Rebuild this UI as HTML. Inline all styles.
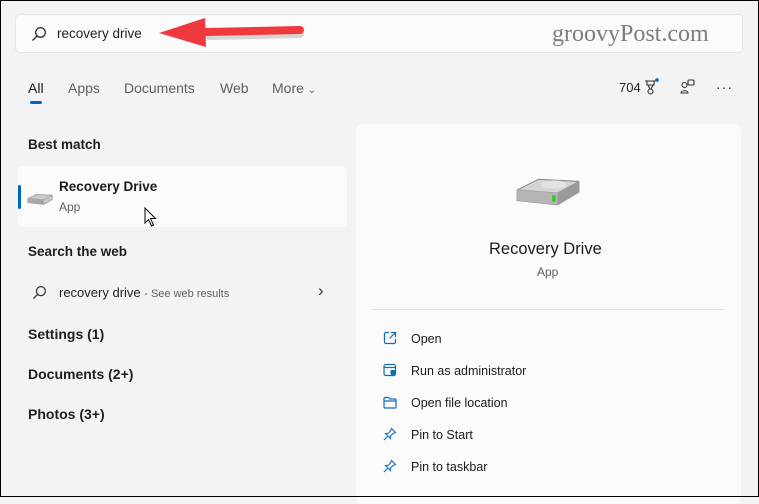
<!DOCTYPE html>
<html><head><meta charset="utf-8"><style>
*{margin:0;padding:0;box-sizing:border-box}
body{width:759px;height:497px;overflow:hidden;background:#f3f3f3;font-family:"Liberation Sans","DejaVu Sans",sans-serif;color:#1b1b1b;position:relative}
.frame{position:absolute;inset:0;border:1px solid #000;pointer-events:none;z-index:9}
.a{position:absolute;white-space:nowrap}
.search{position:absolute;left:15px;top:14px;width:728px;height:39px;background:#fbfbfb;border:1px solid #e6e6e6;border-radius:5px}
.h{font-size:14px;font-weight:bold;color:#202020}
.tab{font-size:14px;color:#5f5f5f;top:80px}
.panel{position:absolute;left:356px;top:124px;width:385px;height:380px;background:#fbfbfb;border-radius:7px}
.act{font-size:12.5px;color:#1b1b1b;left:411px}
svg.ic{position:absolute}
</style></head><body>
<div class="frame"></div>
<div class="search"></div>
<svg class="ic" style="left:31px;top:26px" width="16" height="16" viewBox="0 0 16 16"><circle cx="9.5" cy="6.5" r="4.8" fill="none" stroke="#333" stroke-width="1.3"/><path d="M6 10L1.5 14.5" stroke="#333" stroke-width="1.4"/></svg>
<div class="a" style="left:57px;top:26px;font-size:13.5px;color:#222">recovery drive</div>
<svg class="ic" style="left:155px;top:16px" width="150" height="36" viewBox="0 0 150 36"><path d="M52 17L143 15" stroke="#8f8f8f" stroke-width="8" stroke-linecap="round" opacity=".35" transform="translate(2,3)"/><path d="M50 16L145 14" stroke="#ee3a3e" stroke-width="8" stroke-linecap="round"/><path d="M4 17L50 2L51 31Z" fill="#ee3a3e"/></svg>
<div class="a" style="left:552px;top:21px;font-size:24px;font-family:'Liberation Serif',serif;color:#7d7d7d">groovyPost.com</div>

<div class="a tab" style="left:28px;color:#1b1b1b">All</div>
<div style="position:absolute;left:30px;top:101px;width:12px;height:3px;border-radius:2px;background:#0067c0"></div>
<div class="a tab" style="left:68px">Apps</div>
<div class="a tab" style="left:124px">Documents</div>
<div class="a tab" style="left:220px">Web</div>
<div class="a tab" style="left:272px">More <span style="font-size:10px">&#8964;</span></div>
<div class="a" style="left:619px;top:80px;font-size:13px;color:#222">704</div>
<svg class="ic" style="left:643px;top:78px" width="16" height="18" viewBox="0 0 16 18"><path d="M2 3h11M4 3v4h7V3M5 7l2 4M10 7l-2 4" fill="none" stroke="#333" stroke-width="1.1"/><circle cx="7.5" cy="13.5" r="2.5" fill="none" stroke="#333" stroke-width="1.1"/><circle cx="14" cy="2" r="1.8" fill="#0067c0"/></svg>
<svg class="ic" style="left:680px;top:79px" width="16" height="16" viewBox="0 0 16 16"><circle cx="4.5" cy="6" r="2.5" fill="none" stroke="#333" stroke-width="1.1"/><path d="M1 14c0-3 7-3 7 0z" fill="none" stroke="#333" stroke-width="1.1"/><rect x="8" y="1" width="6" height="5" rx="1" fill="none" stroke="#333" stroke-width="1.1"/></svg>
<div class="a" style="left:716px;top:79px;font-size:14px;color:#333;letter-spacing:1px">&middot;&middot;&middot;</div>

<div class="a h" style="left:28px;top:137px;font-size:13.5px">Best match</div>
<div style="position:absolute;left:18px;top:166px;width:329px;height:61px;background:#fbfbfb;border-radius:5px"></div>
<div style="position:absolute;left:18px;top:185px;width:3px;height:24px;border-radius:2px;background:#0067c0"></div>
<svg class="ic" style="left:27px;top:189px" width="26" height="20" viewBox="0 0 62 30"><path d="M2 14L22 4L60 6L60 16L40 28L2 24Z" fill="#c8c8c8" stroke="#8a8a8a" stroke-width="1.5"/><path d="M2 14L40 17L60 6" fill="none" stroke="#999" stroke-width="1.5"/><path d="M2 14L40 17L40 28L2 24Z" fill="#a9a9a9"/><rect x="34" y="19" width="3" height="6" fill="#3c3"/></svg>
<div class="a" style="left:59px;top:179px;font-size:13.5px;font-weight:bold;color:#1b1b1b">Recovery Drive</div>
<div class="a" style="left:59px;top:200px;font-size:12px;color:#5f5f5f">App</div>
<svg class="ic" style="left:144px;top:207px" width="14" height="22" viewBox="0 0 14 22"><path d="M1 1L1 16L4.5 12.5L7.5 19L9.5 18L6.5 11.5L11.5 11.5Z" fill="#fff" stroke="#000" stroke-width="1"/></svg>

<div class="a h" style="left:28px;top:244px;font-size:13.5px">Search the web</div>
<svg class="ic" style="left:32px;top:285px" width="15" height="15" viewBox="0 0 16 16"><circle cx="9.5" cy="6.5" r="4.8" fill="none" stroke="#333" stroke-width="1.3"/><path d="M6 10L1.5 14.5" stroke="#333" stroke-width="1.4"/></svg>
<div class="a" style="left:59px;top:285px;font-size:13px;color:#222">recovery drive <span style="font-size:11px;color:#5f5f5f">- See web results</span></div>
<div class="a" style="left:318px;top:281px;font-size:17px;color:#333">&#8250;</div>
<div class="a h" style="left:28px;top:326px">Settings (1)</div>
<div class="a h" style="left:28px;top:366px">Documents (2+)</div>
<div class="a h" style="left:28px;top:406px">Photos (3+)</div>

<div class="panel"></div>
<svg class="ic" style="left:515px;top:174px" width="66" height="34" viewBox="0 0 62 30"><path d="M2 14L22 4L60 6L60 16L40 28L2 24Z" fill="#d4d4d4" stroke="#8a8a8a" stroke-width="1"/><ellipse cx="36" cy="9" rx="12" ry="4" fill="#e2e2e2"/><path d="M2 14L40 17L60 6" fill="none" stroke="#999" stroke-width="1"/><path d="M2 14L40 17L40 28L2 24Z" fill="#b4b4b4"/><path d="M40 17L60 6L60 16L40 28Z" fill="#9a9a9a"/><rect x="35" y="19" width="3" height="6" fill="#2c2"/></svg>
<div class="a" style="left:489px;top:240px;font-size:16.5px;color:#1b1b1b">Recovery Drive</div>
<div class="a" style="left:537px;top:265px;font-size:12px;color:#5f5f5f">App</div>
<div style="position:absolute;left:371px;top:309px;width:354px;height:1px;background:#e5e5e5"></div>

<svg class="ic" style="left:383px;top:331px" width="14" height="14" viewBox="0 0 14 14" fill="none" stroke="#0f6cbd" stroke-width="1.2"><path d="M6 1.5H3a1.5 1.5 0 0 0-1.5 1.5v8A1.5 1.5 0 0 0 3 12.5h8a1.5 1.5 0 0 0 1.5-1.5V8M8 1.5h4.5V6M12.5 1.5L6.5 7.5"/></svg>
<div class="a act" style="top:332px">Open</div>
<svg class="ic" style="left:383px;top:363px" width="14" height="14" viewBox="0 0 14 14"><rect x="1" y="1.5" width="11.5" height="11" rx="2" fill="none" stroke="#0f6cbd" stroke-width="1.2"/><path d="M1 4.5h11.5" stroke="#0f6cbd" stroke-width="1.2"/><path d="M7.5 7h5v4l-2.5 2.5-2.5-2.5z" fill="#0f6cbd"/></svg>
<div class="a act" style="top:364px">Run as administrator</div>
<svg class="ic" style="left:383px;top:396px" width="14" height="13" viewBox="0 0 14 13" fill="none" stroke="#0f6cbd" stroke-width="1.2"><path d="M1 2.5a1 1 0 0 1 1-1h3.5l1.5 1.5h5a1 1 0 0 1 1 1v7a1 1 0 0 1-1 1H2a1 1 0 0 1-1-1z M1 5h12"/></svg>
<div class="a act" style="top:396px">Open file location</div>
<svg class="ic" style="left:383px;top:427px" width="14" height="14" viewBox="0 0 14 14" fill="none" stroke="#0f6cbd" stroke-width="1.1"><path d="M8.5 1.5L12.5 5.5L10 6.5L7.5 9L7.5 11.5L2.5 6.5L5 6.5L7.5 4Z M5 9L1 13"/></svg>
<div class="a act" style="top:428px">Pin to Start</div>
<svg class="ic" style="left:383px;top:459px" width="14" height="14" viewBox="0 0 14 14" fill="none" stroke="#0f6cbd" stroke-width="1.1"><path d="M8.5 1.5L12.5 5.5L10 6.5L7.5 9L7.5 11.5L2.5 6.5L5 6.5L7.5 4Z M5 9L1 13"/></svg>
<div class="a act" style="top:460px">Pin to taskbar</div>
</body></html>
